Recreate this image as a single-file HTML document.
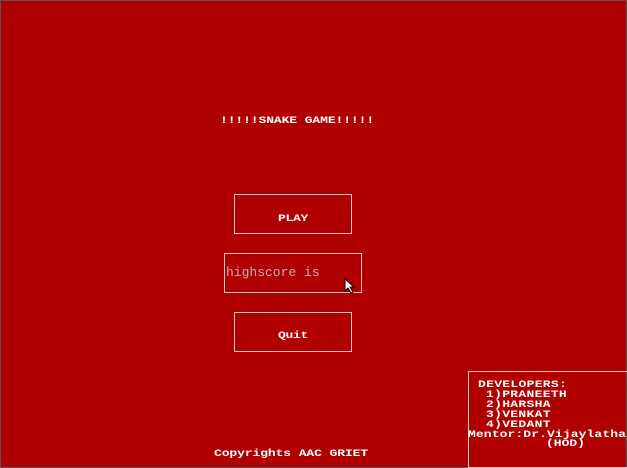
<!DOCTYPE html>
<html><head><style>
html,body{margin:0;padding:0}
body{width:627px;height:468px;background:#b00000;position:relative;overflow:hidden;box-sizing:border-box;border:1px solid #555;}
.t{position:absolute;color:#fff;font-family:"Liberation Mono",monospace;font-weight:bold;white-space:pre;line-height:10px;transform-origin:0 0;}
.b{position:absolute;border:1px solid #f0c8c8;box-sizing:border-box}
</style></head><body>
<div class="t" style="left:219px;top:116px;font-size:13px;letter-spacing:-0.1px;transform:scaleY(0.75)">!!!!!SNAKE GAME!!!!!</div>
<div class="b" style="left:233px;top:193px;width:118px;height:40px"></div>
<div class="t" style="left:277px;top:214px;font-size:13px;letter-spacing:-0.3px;transform:scaleY(0.75)">PLAY</div>
<div class="b" style="left:223px;top:252px;width:138px;height:40px"></div>
<div style="position:absolute;left:225px;top:264px;font-family:'Liberation Mono',monospace;font-size:13px;color:#c8b0b0;white-space:pre">highscore is</div>
<svg style="position:absolute;left:343px;top:277px" width="12" height="16" viewBox="0 0 12 16"><path d="M1 1 L1 13 L4 10 L7 15 L9 14 L6 9 L10 9 Z" fill="#fff" stroke="#000" stroke-width="1"/></svg>
<div class="b" style="left:233px;top:311px;width:118px;height:40px"></div>
<div class="t" style="left:277px;top:331px;font-size:13px;letter-spacing:-0.3px;transform:scaleY(0.75)">Quit</div>
<div class="t" style="left:213px;top:449px;font-size:13px;letter-spacing:-0.1px;transform:scaleY(0.75)">Copyrights AAC GRIET</div>
<div class="b" style="left:467px;top:370px;width:160px;height:97px"></div>
<div class="t" style="left:477px;top:380px;font-size:13px;letter-spacing:0.3px;transform:scaleY(0.77)">DEVELOPERS:</div>
<div class="t" style="left:485px;top:390px;font-size:13px;letter-spacing:0.3px;transform:scaleY(0.77)">1)PRANEETH</div>
<div class="t" style="left:485px;top:400px;font-size:13px;letter-spacing:0.3px;transform:scaleY(0.77)">2)HARSHA</div>
<div class="t" style="left:485px;top:410px;font-size:13px;letter-spacing:0.3px;transform:scaleY(0.77)">3)VENKAT</div>
<div class="t" style="left:485px;top:420px;font-size:13px;letter-spacing:0.3px;transform:scaleY(0.77)">4)VEDANT</div>
<div class="t" style="left:467px;top:430px;font-size:13px;letter-spacing:0.1px;transform:scaleY(0.77)">Mentor:Dr.Vijaylatha</div>
<div class="t" style="left:545px;top:439px;font-size:13px;transform:scaleY(0.77)">(HOD)</div>
</body></html>
